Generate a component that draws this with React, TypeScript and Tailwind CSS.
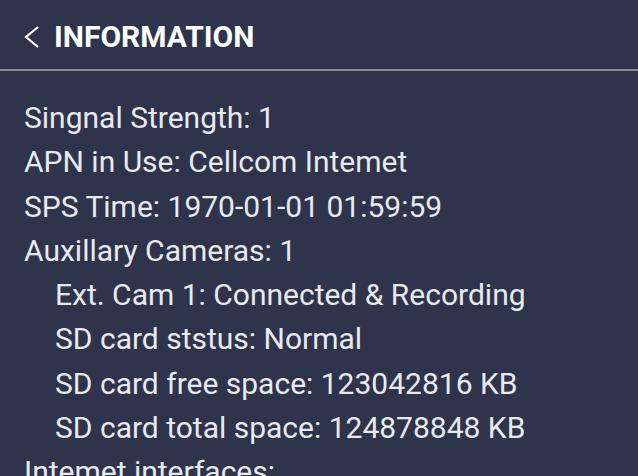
import React from "react";

export default function App() {
  const lines: { t: string; i?: boolean }[] = [
    { t: "Singnal Strength: 1" },
    { t: "APN in Use: Cellcom Intemet" },
    { t: "SPS Time: 1970-01-01 01:59:59" },
    { t: "Auxillary Cameras: 1" },
    { t: "Ext. Cam 1: Connected & Recording", i: true },
    { t: "SD card ststus: Normal", i: true },
    { t: "SD card free space: 123042816 KB", i: true },
    { t: "SD card total space: 124878848 KB", i: true },
    { t: "Intemet interfaces:" },
  ];
  return (
    <div
      className="w-[638px] h-[476px] overflow-hidden bg-[#2d344b] text-[#e9eaee]"
      style={{ fontFamily: "Roboto, sans-serif" }}
    >
      <div className="h-[69px] flex items-center pl-[23px] pt-[3px] gap-[14px]">
        <svg width="17" height="24" viewBox="0 0 17 24" className="mt-[1px]">
          <path d="M15 2 L3 12 L15 22" fill="none" stroke="#ffffff" strokeWidth="2.2" />
        </svg>
        <span className="text-[30px] font-bold text-white">INFORMATION</span>
      </div>
      <div className="h-[2px] bg-[#8b8e98]" />
      <div className="pt-[25px] flex flex-col">
        {lines.map((l, k) => (
          <div
            key={k}
            className={`h-[44.3px] leading-[44px] text-[30px] whitespace-nowrap ${l.i ? "pl-[55px]" : "pl-[24px]"}`}
          >
            {l.t}
          </div>
        ))}
      </div>
    </div>
  );
}
